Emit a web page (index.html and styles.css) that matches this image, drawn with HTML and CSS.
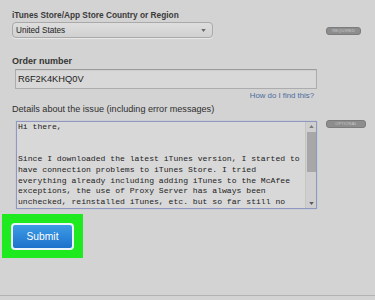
FILE: index.html
```html
<!DOCTYPE html>
<html>
<head>
    <link rel="stylesheet" href="styles.css">
</head>
<body>
    <div class="page">
        <!-- negara / region -->
        <div class="row">
            <div class="field">
                <div class="label label-strong">iTunes Store/App Store Country or Region</div>
                <div class="select">
                    <span>United States</span>
                    <svg class="select-arrow" viewBox="0 0 6 4"><path d="M0 0H6L3 4Z" fill="#6a6a6a"/></svg>
                </div>
            </div>
            <span class="badge badge-first">REQUIRED</span>
        </div>

        <!-- nomor order -->
        <div class="row">
            <div class="field">
                <div class="label label-bold label-order">Order number</div>
                <div class="input">R6F2K4KHQ0V</div>
                <a class="help-link" href="#">How do I find this?</a>
            </div>
        </div>

        <!-- detail masalah -->
        <div class="row">
            <div class="field">
                <div class="label label-details">Details about the issue (including error messages)</div>
                <div class="textarea">
                    <div class="textarea-text">Hi there,


Since I downloaded the latest iTunes version, I started to
have connection problems to iTunes Store. I tried
everything already including adding iTunes to the McAfee
exceptions, the use of Proxy Server has always been
unchecked, reinstalled iTunes, etc. but so far still no</div>
                    <div class="scrollbar">
                        <svg class="scroll-arrow" viewBox="0 0 6 4"><path d="M0 4H6L3 0Z" fill="#7a7a7a"/></svg>
                        <div class="scroll-thumb"></div>
                        <div class="scroll-space"></div>
                        <svg class="scroll-arrow" viewBox="0 0 6 4"><path d="M0 0H6L3 4Z" fill="#5a5a5a"/></svg>
                    </div>
                </div>
            </div>
            <span class="badge badge-second">OPTIONAL</span>
        </div>

        <div class="highlight">
            <button class="btn-submit">Submit</button>
        </div>
    </div>
</body>
</html>
```

FILE: styles.css
```css
body {
    margin: 0;
    padding: 0;
    background: #d3d3d3;
    font-family: "Liberation Sans", Arial, sans-serif;
    color: #333;
}

.page {
    height: 296px;
    box-sizing: border-box;
    padding: 9px 8px 0 12px;
    border-bottom: 1px solid #b3b3b3;
}

.row {
    display: flex;
    align-items: flex-start;
}

.field {
    width: 305px;
}

.label {
    font-size: 9px;
    line-height: 12px;
    color: #2f2f2f;
    white-space: nowrap;
}

.label-strong {
    font-weight: bold;
    font-size: 8.3px;
    color: #3a3a3a;
}

.label-bold {
    font-weight: bold;
    font-size: 9px;
    color: #333;
}

.label-order {
    margin-top: 17px;
}

.label-details {
    margin-top: 2px;
    font-size: 9.1px;
}

.select {
    display: flex;
    align-items: center;
    justify-content: space-between;
    width: 201px;
    height: 16px;
    box-sizing: border-box;
    margin-top: 1px;
    padding: 0 6px 0 3px;
    border: 1px solid #a9a9a9;
    border-radius: 4px;
    background: linear-gradient(#dedede, #d1d1d1);
    box-shadow: 0 1px 1px rgba(255, 255, 255, 0.5);
    font-size: 8.2px;
    color: #222;
}

.select-arrow {
    width: 5px;
    height: 3px;
}

.input {
    width: 302px;
    height: 20px;
    box-sizing: border-box;
    margin: 2px 0 0 3px;
    padding: 0 2px;
    border: 1px solid #acacac;
    border-top-color: #9c9c9c;
    background: #d8d8d8;
    box-shadow: inset 0 1px 1px rgba(0, 0, 0, 0.06);
    font-size: 9.3px;
    line-height: 18px;
    color: #222;
}

.help-link {
    display: block;
    margin-top: 2px;
    padding-right: 3px;
    text-align: right;
    font-size: 7.8px;
    line-height: 10px;
    color: #4a6c9e;
    text-decoration: none;
}

.textarea {
    display: flex;
    width: 301px;
    height: 88px;
    box-sizing: border-box;
    margin: 6px 0 0 4px;
    border: 1px solid #8e98c0;
    background: #d8d8d8;
    box-shadow: 0 0 1px #aab3d6;
}

.textarea-text {
    flex: 1;
    padding: 0 0 0 1px;
    font-family: "Liberation Mono", "Courier New", monospace;
    font-size: 8.1px;
    line-height: 10.7px;
    white-space: pre;
    color: #1c1c1c;
}

.scrollbar {
    display: flex;
    flex-direction: column;
    align-items: center;
    width: 10px;
    background: #cfcfcf;
    border-left: 1px solid #c4c4c4;
}

.scroll-arrow {
    width: 5px;
    height: 3px;
    margin: 3px 0;
}

.scroll-thumb {
    width: 9px;
    height: 40px;
    background: #a7a7a7;
    margin-top: 1px;
}

.scroll-space {
    flex: 1;
}

.badge {
    margin-left: auto;
    padding: 0 5px;
    height: 6px;
    border-radius: 3px;
    background: #8d8d8d;
    border: 1px solid #7c7c7c;
    color: #c9c9c9;
    font-size: 4px;
    line-height: 6px;
    letter-spacing: 0.2px;
    white-space: nowrap;
}

.badge-first {
    margin-top: 18px;
    margin-right: 6px;
}

.badge-second {
    margin-top: 19px;
    margin-right: 1px;
    padding: 0 8px;
}

.highlight {
    display: inline-block;
    margin: 5px 0 0 -10px;
    padding: 9px 9px 8px 9px;
    background: #1fea1f;
}

.btn-submit {
    display: block;
    width: 63px;
    height: 27px;
    border: 2px solid #e9f4fb;
    border-radius: 4px;
    background: linear-gradient(#3e9be6, #1c72cb);
    color: #fff;
    font-family: "Liberation Sans", Arial, sans-serif;
    font-size: 10.3px;
    cursor: pointer;
}
```
